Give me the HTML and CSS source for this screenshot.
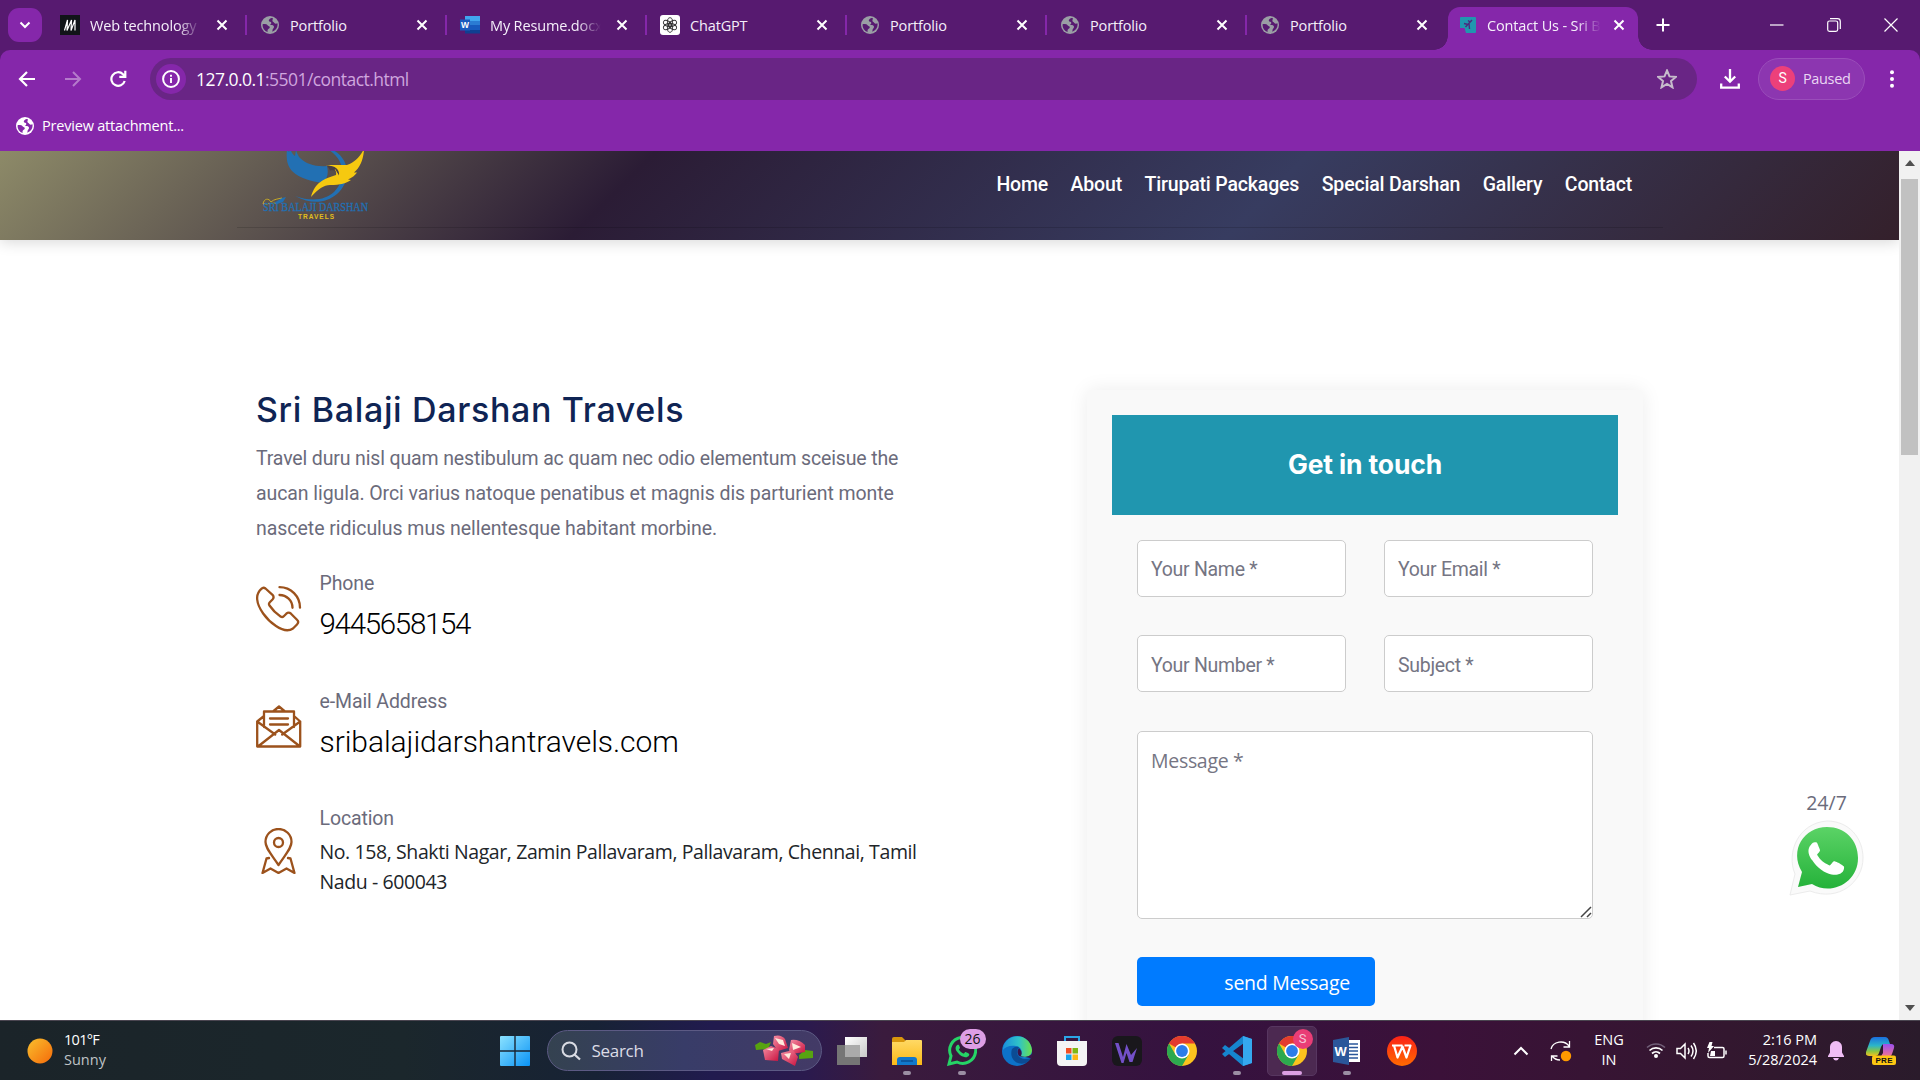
FILE: index.html
```html
<!DOCTYPE html>
<html lang="en">
<head>
<meta charset="utf-8">
<title>Contact Us - Sri Balaji Darshan Travels</title>
<link rel="stylesheet" href="styles.css">
</head>
<body>
<svg class="defs" width="0" height="0">
  <defs>
    <linearGradient id="gSun" x1="0" y1="0" x2="1" y2="1"><stop offset="0" stop-color="#f9c02d"/><stop offset="1" stop-color="#f56a0a"/></linearGradient>
    <linearGradient id="gWin" gradientUnits="userSpaceOnUse" x1="0" y1="0" x2="30" y2="30"><stop offset="0" stop-color="#8be2ff"/><stop offset="1" stop-color="#0a93f5"/></linearGradient>
    <linearGradient id="gFolder" x1="0" y1="0" x2="0" y2="1"><stop offset="0" stop-color="#ffd965"/><stop offset="1" stop-color="#fbb917"/></linearGradient>
    <linearGradient id="gWa" x1="0" y1="0" x2="0" y2="1"><stop offset="0" stop-color="#5bd366"/><stop offset="1" stop-color="#25b23a"/></linearGradient>
    <linearGradient id="gEdge" x1="0" y1="0" x2="1" y2="0"><stop offset="0" stop-color="#1b8fdc"/><stop offset=".55" stop-color="#2fc3c8"/><stop offset="1" stop-color="#6be04c"/></linearGradient>
    <linearGradient id="gCop1" x1="0" y1="0" x2="0" y2="1"><stop offset="0" stop-color="#1b6fe0"/><stop offset=".45" stop-color="#2bb5c9"/><stop offset=".75" stop-color="#8ac542"/><stop offset="1" stop-color="#f4c020"/></linearGradient>
    <linearGradient id="gCop2" x1="0" y1="0" x2="0" y2="1"><stop offset="0" stop-color="#9b4ff0"/><stop offset="1" stop-color="#f3768c"/></linearGradient>
    <linearGradient id="gTask" x1="0" y1="0" x2="1" y2="1"><stop offset="0" stop-color="#fff"/><stop offset="1" stop-color="#c9c9c9"/></linearGradient>
    <linearGradient id="gWps" x1="0" y1="0" x2="0" y2="1"><stop offset="0" stop-color="#fb2218"/><stop offset="1" stop-color="#ff6a00"/></linearGradient>
    <linearGradient id="gPink" x1="0" y1="0" x2="1" y2="1"><stop offset="0" stop-color="#f58fa4"/><stop offset="1" stop-color="#c9123f"/></linearGradient>
    <symbol id="globe" viewBox="0 0 18 18"><circle cx="9" cy="9" r="9"/><path class="land" d="M10.3 1.9C9 2.4 7.6 3.6 7.8 4.7c.3 1.2 2.300.8 2.500 2 .2 1-1.100 1.300-1.100 2.300 2.100-.2 3.800.3 3.800 2 0 1.300-1.300 1.500-1.400 2.700l-.3 2c3.200-1.100 5.300-3.800 5.300-6.900 0-.6-.1-1.100-.2-1.600-1 .6-2.300.7-3-.2-.700-1-2.200-1-2-2.400.1-1 .6-1.500.6-2.300zM1.600 8.200C2.900 7.900 5.700 8 6.500 9.200c.7 1.200 2.300.6 2.300 2 0 1.700-2.300 1.400-2.300 3.200l.1 1.600C3.500 14.900 1.300 12 1.600 8.200z"/></symbol>
    <symbol id="close" viewBox="0 0 12 12"><path d="M1.500 1.500l9 9M10.500 1.500l-9 9" stroke="#fff" stroke-width="2" fill="none"/></symbol>
    <symbol id="chrome" viewBox="0 0 30 30"><circle cx="15" cy="15" r="15" fill="#fcc31e"/><path d="M15 15L2 7.500A15 15 0 0 1 28 7.500L15 7.500z" fill="#e33b2e"/><path d="M2 7.500A15 15 0 0 0 15 30L21.500 18.700 8.500 18.700z" fill="#2da94f"/><circle cx="15" cy="15" r="7.500" fill="#fff"/><circle cx="15" cy="15" r="5.900" fill="#2b7de9"/></symbol>
    <symbol id="handset" viewBox="0 0 24 24"><path d="M20.500 16.900c-.5-.3-2.900-1.500-3.400-1.600-.4-.2-.8-.2-1.100.3-.3.500-1.300 1.600-1.600 1.900-.3.300-.6.400-1.100.1-3-1.500-4.900-2.700-6.900-6-.5-.9.500-.8 1.500-2.700.2-.3.100-.6 0-.9C7.800 7.700 6.800 5.300 6.400 4.300 6 3.400 5.600 3.500 5.300 3.500c-.7 0-1.500 0-2.200.8C2.400 5.100.9 6.500.9 9c0 2.600 1.900 5.100 2.200 5.400.3.400 3.700 5.900 9.200 8 3.500 1.400 4.900 1.300 6.600 1 1.100-.2 3.100-1.300 3.500-2.500.5-1.200.5-2.300.3-2.500-.2-.3-1.600-1.200-2.200-1.500z"/></symbol>
  </defs>
</svg>

<div class="browser">
  <div class="tabstrip">
    <button class="tab-search"><svg width="12" height="8" viewBox="0 0 12 8"><path d="M1.500 1.500L6 6l4.500-4.500" fill="none" stroke="#fff" stroke-width="2"/></svg></button>
    <div class="tab"><svg width="20" height="20" viewBox="0 0 20 20"><path fill="#111418" d="M0 0h20v20H0z"/><path d="M4.500 15.500L7.500 5 7 15.500 11.500 5 11 15.500 15 5v10.500" fill="none" stroke="#fff" stroke-width="1.200"/></svg><span class="title fade">Web technology</span><svg class="x"><use href="#close"/></svg></div>
    <div class="tab"><svg class="globe grey"><use href="#globe"/></svg><span class="title">Portfolio</span><svg class="x"><use href="#close"/></svg></div>
    <div class="tab"><svg width="20" height="20" viewBox="0 0 20 20"><path fill="#41a5ee" d="M5 1h15v5H5z"/><path fill="#2b7cd3" d="M5 6h15v4H5z"/><path fill="#185abd" d="M5 10h15v5H5z"/><path fill="#103f91" d="M5 15h15v3.500H5z"/><path fill="#185abd" d="M0 4.500h10v11H0z"/><text x="1" y="13" class="wlogo">W</text></svg><span class="title fade">My Resume.docx</span><svg class="x"><use href="#close"/></svg></div>
    <div class="tab"><svg width="20" height="20" viewBox="0 0 20 20"><rect width="20" height="20" rx="3" fill="#fff"/><g fill="none" stroke="#333" stroke-width=".9"><ellipse cx="10" cy="7" rx="2.600" ry="4.300"/><ellipse cx="10" cy="7" rx="2.600" ry="4.300" transform="rotate(60 10 10)"/><ellipse cx="10" cy="7" rx="2.600" ry="4.300" transform="rotate(120 10 10)"/><ellipse cx="10" cy="7" rx="2.600" ry="4.300" transform="rotate(180 10 10)"/><ellipse cx="10" cy="7" rx="2.600" ry="4.300" transform="rotate(240 10 10)"/><ellipse cx="10" cy="7" rx="2.600" ry="4.300" transform="rotate(300 10 10)"/></g></svg><span class="title">ChatGPT</span><svg class="x"><use href="#close"/></svg></div>
    <div class="tab"><svg class="globe grey"><use href="#globe"/></svg><span class="title">Portfolio</span><svg class="x"><use href="#close"/></svg></div>
    <div class="tab"><svg class="globe grey"><use href="#globe"/></svg><span class="title">Portfolio</span><svg class="x"><use href="#close"/></svg></div>
    <div class="tab last"><svg class="globe grey"><use href="#globe"/></svg><span class="title">Portfolio</span><svg class="x"><use href="#close"/></svg></div>
    <div class="tab active"><svg width="16" height="16" viewBox="0 0 16 16"><path fill="#2096af" d="M1 0h14a1 1 0 0 1 1 1v14a1 1 0 0 1-1 1H6L4.500 11H0V1a1 1 0 0 1 1-1z"/><path d="M4 6.500l4 1M12 3L5.500 10M9 6.500L9.500 12M8 3.500l2 1.500" stroke="#4b2a7e" stroke-width="1.400" fill="none"/></svg><span class="title fade">Contact Us - Sri B</span><svg class="x"><use href="#close"/></svg></div>
    <svg class="plus" width="14" height="14" viewBox="0 0 14 14"><path d="M7 0.500v13M.5 7h13" stroke="#fff" stroke-width="2"/></svg>
    <div class="winctl">
      <svg width="14" height="14" viewBox="0 0 14 14"><path d="M0 7h13.500" stroke="#fff" stroke-width="1.200"/></svg>
      <svg width="14" height="14" viewBox="0 0 14 14"><g fill="none" stroke="#fff" stroke-width="1.200"><rect x=".7" y="3" width="10" height="10.300" rx="1.800"/><path d="M3 .7h7.500a2.800 2.800 0 0 1 2.800 2.800v7.500"/></g></svg>
      <svg width="14" height="14" viewBox="0 0 14 14"><path d="M.5.5l13 13M13.500.5L.5 13.500" stroke="#fff" stroke-width="1.200"/></svg>
    </div>
  </div>
  <div class="toolbar">
    <div class="navbtns">
      <svg width="18" height="18" viewBox="0 0 18 18"><path d="M17 9H2.500M9 2L2 9l7 7" fill="none" stroke="#fff" stroke-width="2.200"/></svg>
      <svg width="18" height="18" viewBox="0 0 18 18"><path d="M1 9h14.500M9 2l7 7-7 7" fill="none" stroke="#b57bcb" stroke-width="2"/></svg>
      <svg width="18" height="18" viewBox="0 0 18 18"><path d="M14.700 11A6.800 6.800 0 1 1 13 4.200l1.500 1.600M15.300.8v6H9.300" fill="none" stroke="#fff" stroke-width="2.200"/></svg>
    </div>
    <div class="omnibox">
      <span class="site-info"><svg width="18" height="18" viewBox="0 0 18 18"><circle cx="9" cy="9" r="7.900" fill="none" stroke="#fff" stroke-width="2"/><path d="M9 8v5M9 4.700v2" stroke="#fff" stroke-width="1.900"/></svg></span>
      <span class="url">127.0.0.1<i>:5501/contact.html</i></span>
      <svg width="20" height="20" viewBox="0 0 20 20"><path d="M10 1.500l2.500 5.900 6.300.5-4.800 4.200 1.500 6.300-5.500-3.400-5.500 3.400L6 12.100 1.200 7.900l6.300-.5z" fill="none" stroke="#c6bccb" stroke-width="2"/></svg>
    </div>
    <svg class="dl" width="20" height="20" viewBox="0 0 20 20"><path d="M10 0v12M4.800 7.500L10 12.700l5.200-5.200M1.200 14.500v4.200h17.600v-4.200" fill="none" stroke="#fff" stroke-width="2.300"/></svg>
    <div class="profile"><span class="avatar">S</span><span>Paused</span></div>
    <svg class="kebab" width="6" height="18" viewBox="0 0 6 18"><g fill="#fff"><circle cx="3" cy="2.200" r="2"/><circle cx="3" cy="9" r="2"/><circle cx="3" cy="15.800" r="2"/></g></svg>
  </div>
  <div class="bookmarks"><svg class="globe white"><use href="#globe"/></svg><span>Preview attachment...</span></div>
</div>

<div class="viewport">
  <div class="page">
    <header class="site-header">
      <div class="container">
        <svg class="logo" width="110" height="76" viewBox="0 0 110 76">
          <path d="M71-1c17 9 19 31 4 44-11 9-25 11-42 2 17 6 30 4 39-4 12-12 12-31-5-42z" fill="#2270b3"/>
          <path d="M25-2c-1 10 0 16 5 22 8 8 20 10 30 12 5-4 7-9 5-17-11 1-21-2-27-8-2-2-3-5-4-8l-1 6c-3-2-4-5-5-8l-1 4z" fill="#2270b3"/>
          <path d="M102-2c-5 9-9 13-17 16l-21 0c7 1 11 5 10 10-12 4-21 7-25 22 7-8 13-12 19-12 10 0 17-2 21-5l-3-.5c4-2 7-4 9-7l-3 0c6-5 9-12 10-22z" fill="#f6c910"/>
          <path d="M65 14.500c8 0 13 4 12 10-2-5-5-6-9-5-1-2-2-4-3-5zM72 20l3 1-2-3z" fill="#4a3e42"/>
          <path d="M1 53c1-6 6-6 8-2 3-3 7-3 11-4l-5 5c-4 0-9 1-14 1z" fill="none" stroke="#c5a827"/>
          <path d="M12 52l8-5 4-1-3 5-6 2z" fill="#2270b3"/>
          <text x="1" y="60" class="logo-a" textLength="105" lengthAdjust="spacingAndGlyphs">SRI BALAJI DARSHAN</text>
          <text x="36" y="68" class="logo-b" textLength="36">TRAVELS</text>
        </svg>
        <nav><a>Home</a><a>About</a><a>Tirupati Packages</a><a>Special Darshan</a><a>Gallery</a><a>Contact</a></nav>
      </div>
    </header>
    <main class="contact">
      <section class="info">
        <h1>Sri Balaji Darshan Travels</h1>
        <p class="lead"><span class="l1">Travel duru nisl quam nestibulum ac quam nec odio elementum sceisue the</span><br><span class="l2">aucan ligula. Orci varius natoque penatibus et magnis dis parturient monte</span><br><span class="l3">nascete ridiculus mus nellentesque habitant morbine.</span></p>
        <div class="item phone">
          <svg width="46" height="46" viewBox="0 0 46 46" class="line"><path d="M9.500 2.500c-1.300-1-3-.8-4.200.4C2 6 .8 9.500 1.200 13.500 2 22 10 33.500 20 40c6 4 12.500 5.500 17 2.500l4-4c1.500-1.500 1.500-3.300 0-4.800l-6-6c-1.500-1.400-3.200-1.400-4.700 0l-2.500 2.500c-1 1-2.200 1-3.300.3-4.500-3-8-6.500-11-11-.8-1.200-.7-2.300.3-3.300L16.500 13.500c1.400-1.500 1.300-3.200 0-4.700z"/><path d="M23.500 1.200c11.500 0 20.500 9 20.500 20.500M23.500 9c7 0 13 5.500 13 12.800"/></svg>
          <div><span class="label">Phone</span><span class="value number">9445658154</span></div>
        </div>
        <div class="item mail">
          <svg width="46" height="44" viewBox="0 0 46 44" class="line"><path d="M8 11L1.200 16.500v25h43v-25L38 11M8 22V6.500h30V22M17 6.500l6-5 6 5M1.200 16.500l18 13M44.200 16.500l-18 13M2 41.500L23 25l21 16.500M14 13.500h18M14 19.500h18"/></svg>
          <div><span class="label">e-Mail Address</span><span class="value">sribalajidarshantravels.com</span></div>
        </div>
        <div class="item place">
          <svg width="46" height="46" viewBox="0 0 46 46" class="line"><path d="M22.500 37C14.500 25 9.500 20 9.500 14a13 13 0 0 1 26 0C35.500 20 30.500 25 22.500 37z"/><circle cx="22.500" cy="14.500" r="4.500"/><path d="M13 30l-2.500.5L6.500 45l8-4.500 8 4.500 8-4.500 8 4.500-4-14.500-2.500-.5"/></svg>
          <div><span class="label">Location</span><span class="address">No. 158, Shakti Nagar, Zamin Pallavaram, Pallavaram, Chennai, Tamil<br>Nadu - 600043</span></div>
        </div>
      </section>
      <section class="card">
        <h2>Get in touch</h2>
        <form>
          <div class="field">Your Name *</div><div class="field">Your Email *</div>
          <div class="field low">Your Number *</div><div class="field low">Subject *</div>
          <div class="field area"><span>Message *</span><svg width="12" height="12" viewBox="0 0 12 12"><path d="M1 11L11 1M7 11l4-4" stroke="#444" stroke-width="1.500"/></svg></div>
          <button type="button">send Message</button>
        </form>
      </section>
    </main>
    <aside class="chat"><span>24/7</span>
      <svg width="75" height="76" viewBox="0 0 75 76"><path d="M1 75L6 54C-3 33 9 3 38 1c22 0 36 17 36 37 0 24-24 44-53 33z" fill="#fafafa" stroke="#ececec"/><path d="M9 67l4-15C0 30 15 7 38 7c18 0 31 13 31 31 0 25-27 38-46 26z" fill="url(#gWa)"/><use href="#handset" x="18" y="15" width="39" height="42" fill="#fff"/></svg>
    </aside>
  </div>
  <div class="scrollbar"><svg width="10" height="6"><path d="M0 6L5 0l5 6z" fill="#505050"/></svg><div class="thumb"></div><svg width="10" height="6"><path d="M0 0L5 6l5-6z" fill="#505050"/></svg></div>
</div>

<footer class="taskbar">
  <div class="weather"><svg width="26" height="26"><circle cx="13" cy="13" r="12.500" fill="url(#gSun)"/></svg><div><span class="temp">101°F</span><span class="dim">Sunny</span></div></div>
  <div class="apps">
    <svg class="start" width="30" height="30" viewBox="0 0 30 30"><path fill="url(#gWin)" d="M0 1q0-1 1-1h13.300v14.300H0zM15.700 0H29q1 0 1 1v13.300H15.700zM0 15.700h14.300V30H1q-1 0-1-1zM15.700 15.700H30V29q0 1-1 1H15.700z"/></svg>
    <div class="search"><svg width="20" height="20" viewBox="0 0 20 20"><circle cx="8.500" cy="8.500" r="7" fill="none" stroke="#d9dbe3" stroke-width="2"/><path d="M13.500 13.500l5.500 5" stroke="#d9dbe3" stroke-width="2.300"/></svg><span>Search</span>
      <svg width="60" height="32" viewBox="0 0 60 32"><path d="M1 10l5-3 6 2 5-2-3 7-12 1zM45 20l6-5 8 1v7l-14 1z" fill="#57a310"/><g fill="url(#gPink)"><path d="M20 1q7-2 11 3l3 9-10 3-5-7z"/><path d="M37 5q8-1 14 5l0 7-14 2-2-4z"/><path d="M9 15l8-4 8 3-1 12-13-1z"/><path d="M27 18l12-3 5 7-3 9-13-7z"/></g><path d="M21 3l8 2 2 6-6-2zM38 8l9 4-8 3zM30 19l7-1-2 6zM12 14l8-1-2 3z" fill="#ffe9dc"/></svg>
    </div>
    <div class="app"><svg width="30" height="30" viewBox="0 0 30 30"><path fill="#757575" d="M0 9h23v20H0z"/><path fill="url(#gTask)" d="M8 1h22v20H8z"/><path fill="#aaa" d="M8 9h15v12H8z"/></svg></div>
    <div class="app run"><svg width="30" height="30" viewBox="0 0 30 30"><path fill="#d9960c" d="M0 3q0-2 2-2h8l4 4v6H0z"/><path fill="url(#gFolder)" d="M0 6h12l2-2h15q1 0 1 1v24H0z"/><path fill="#1178cc" d="M5 29v-5q0-3 3-3h14q3 0 3 3v5z"/><path d="M9 25h12" stroke="#0a4e93" stroke-width="1.500"/></svg></div>
    <div class="app run"><svg width="30" height="30" viewBox="0 0 30 30"><path d="M2 28l2-8A13 13 0 1 1 10 26z" fill="none" stroke="#25d366" stroke-width="3"/><use href="#handset" x="8" y="6" width="15" height="16" fill="#25d366"/></svg><b class="badge count">26</b></div>
    <div class="app"><svg width="30" height="30" viewBox="0 0 30 30"><circle cx="15" cy="15" r="15" fill="#0d72c8"/><path d="M1 12C4-4 28-4 30 14c0 6-6 9-12 6 3-3 2-9-4-10C8 9 3 11 1 14z" fill="url(#gEdge)"/><path d="M10 13c-3 9 4 17 14 14 2-1 4-3 5-5-8 3-14-1-14-6q0-3 2-5-4-1-7 2z" fill="#0b4c94"/><path d="M17 20q-3-4 0-8 4 4 2 8l9 2 3 0v-5q-5 6-14 3z" fill="#3a1549"/></svg></div>
    <div class="app"><svg width="30" height="30" viewBox="0 0 30 30"><path d="M8 6V1h14v5" fill="none" stroke="#2ba5e6" stroke-width="2"/><path fill="#f4f4f4" d="M0 5h30v21q0 4-4 4H4q-4 0-4-4z"/><path fill="#f04f24" d="M9 12h5.500v5.500H9z"/><path fill="#7db814" d="M15.500 12H21v5.500h-5.500z"/><path fill="#16a4ec" d="M9 18.500h5.500V24H9z"/><path fill="#fcb813" d="M15.500 18.500H21V24h-5.500z"/></svg></div>
    <div class="app"><svg width="30" height="30" viewBox="0 0 30 30"><rect width="30" height="30" rx="6" fill="#19171c"/><path d="M3 7h3.500L11 21l3.500-13L19 19l6-7-4.500 14h-3L14.500 17 11.500 27h-2z" fill="#7350c8"/></svg></div>
    <div class="app"><svg width="30" height="30"><use href="#chrome"/></svg></div>
    <div class="app run"><svg width="30" height="30" viewBox="0 0 30 30"><path d="M21 0l9 3v24l-9 3L0 12l3-3 19 14V7L3 21l-3-3z" fill="#1686cf"/><path d="M21 0l9 3v24l-9 3z" fill="#35a8ef"/></svg></div>
    <div class="app run current"><svg width="30" height="30"><use href="#chrome"/></svg><b class="badge s">S</b></div>
    <div class="app run"><svg width="30" height="30" viewBox="0 0 30 30"><path fill="#fff" d="M14 4h14v22H14z"/><path d="M17 8h9M17 11.500h9M17 15h9M17 18.500h9M17 22h9" stroke="#2b579a" stroke-width="1.300"/><path fill="#2b579a" d="M1 4l16-3v28L1 26z"/><text x="2.500" y="20" class="wapp">W</text></svg></div>
    <div class="app"><svg width="30" height="30" viewBox="0 0 30 30"><circle cx="15" cy="15" r="15" fill="url(#gWps)"/><path d="M5 9.500h10.500M7 9.500l3.500 12 5-11 4 11 4-12h-6" fill="none" stroke="#fff" stroke-width="2.200" stroke-linejoin="round"/></svg></div>
  </div>
  <div class="tray">
    <svg width="16" height="10" viewBox="0 0 16 10"><path d="M1.500 8.500L8 2l6.500 6.500" fill="none" stroke="#fff" stroke-width="2"/></svg>
    <svg class="sync" width="22" height="22" viewBox="0 0 22 22"><path d="M1 9A10 9 0 0 1 19 6M19.500 1v6h-6M1.500 21v-5h6M2 16q3 4 8 4" fill="none" stroke="#fff" stroke-width="1.300"/><circle cx="16" cy="16" r="5.200" fill="#ff9a00"/></svg>
    <div class="lang"><span>ENG</span><span>IN</span></div>
    <svg class="wifi" width="20" height="17" viewBox="0 0 20 17"><path d="M1 5.500a13 13 0 0 1 18 0" fill="none" stroke="#715f78" stroke-width="1.500"/><path d="M3.500 8.500a9.500 9.500 0 0 1 13 0M6 11.500a6 6 0 0 1 8 0" fill="none" stroke="#fff" stroke-width="1.700"/><circle cx="10" cy="14" r="2" fill="#fff"/></svg>
    <svg class="vol" width="21" height="18" viewBox="0 0 21 18"><path d="M1 6.500h3.500L9 2v14l-4.500-4.500H1zM12 6q2 3 0 6M15 3.500q4 5.500 0 11M17.500 1q5.500 8 0 16" fill="none" stroke="#fff" stroke-width="1.500"/></svg>
    <svg class="bat" width="21" height="18" viewBox="0 0 21 18"><path d="M8 5.500h8.500q1.500 0 1.500 1.500v7q0 1.500-1.500 1.500H3.500Q2 15.500 2 14v-3M20 8.500v4" fill="none" stroke="#fff" stroke-width="1.500"/><path d="M3.500 0h3L5.500 4h2.500L2 11l1-5H1zM5 9h4v5H4z" fill="#fff"/></svg>
    <div class="clock"><span>2:16 PM</span><span>5/28/2024</span></div>
    <svg class="bell" width="18" height="20" viewBox="0 0 18 20"><path d="M9 0a6 6 0 0 1 6 6.500v5l2 3.500v1H1v-1l2-3.500v-5A6 6 0 0 1 9 0zM6 17h6q-1 2.500-3 2.500T6 17z" fill="#f0bdf5"/></svg>
    <svg class="copilot" width="30" height="29" viewBox="0 0 30 29"><path d="M9 1h10q3 0 4 4l1 3h-6q-2 0-3 3l-2 6q-1 3-4 3H3q-4 0-3-4L4 5q1-4 5-4z" fill="url(#gCop1)"/><path d="M17 8h8q4 0 3 4l-2 6q-1 3-5 3h-8q3-1 4-4z" fill="url(#gCop2)"/><rect x="6" y="19.500" width="24" height="9.500" rx="2" fill="#fcc612"/><text x="9.500" y="27.300" class="pre" textLength="17">PRE</text></svg>
  </div>
</footer>
</body>
</html>
```
FILE: styles.css
```css
* { box-sizing: border-box; }
body { margin: 0; width: 1920px; height: 1080px; overflow: hidden; display: flex; flex-direction: column; background: #fff; font-family: "Open Sans", "Noto Sans", sans-serif; }
svg { flex: none; display: block; }
.defs { position: absolute; }
button { border: 0; padding: 0; font: inherit; }

/* browser frame */
.browser { height: 151px; background: #571a70; color: #fff; font-size: 14.5px; flex: none; }
.tabstrip { height: 50px; display: flex; align-items: center; padding-left: 8px; }
.tab-search { width: 34px; height: 34px; border-radius: 11px; background: #8527aa; display: grid; place-items: center; margin-right: 5px; }
.tab { width: 200px; height: 20px; display: flex; align-items: center; padding-left: 13px; border-right: 2px solid #8527aa; }
.title { width: 112px; margin-left: 10px; white-space: nowrap; overflow: hidden; letter-spacing: -0.15px; line-height: 22px; padding-top: 1px; color: #f5effa; }
.tab .globe { margin: 0 1px; }
.fade { -webkit-mask-image: linear-gradient(90deg, #000 78%, transparent 99%); mask-image: linear-gradient(90deg, #000 78%, transparent 99%); }
.x { width: 12px; height: 12px; margin-left: 14px; }
.globe { width: 18px; height: 18px; }
.grey { fill: #9a9ea5; color: #571a70; }
.white { fill: #fff; color: #8527aa; }
.land { fill: currentColor; }
.wlogo { font: bold 8.500px "Liberation Sans", sans-serif; fill: #fff; }
.tab.last { border: 0; width: 201px; }
.tab.active { width: 190px; height: 43px; align-self: flex-end; background: #8527aa; border: 0; border-radius: 12px 12px 0 0; padding: 0 0 7px 12px; position: relative; }
.tab.active::before, .tab.active::after { content: ""; position: absolute; bottom: 0; width: 14px; height: 14px; }
.tab.active::before { left: -14px; background: radial-gradient(circle at 0 0, transparent 13.500px, #8527aa 14px); }
.tab.active::after { right: -14px; background: radial-gradient(circle at 100% 0, transparent 13.500px, #8527aa 14px); }
.active .title { margin-left: 11px; width: 115px; }
.active .x { margin-left: 11px; }
.plus { margin-left: 18px; }
.winctl { display: flex; gap: 43px; margin-left: auto; margin-right: 22px; }
.toolbar { height: 58px; background: #8527aa; border-radius: 10px 10px 0 0; display: flex; align-items: center; padding: 0 25px 0 18px; }
.navbtns { display: flex; gap: 28px; width: 132px; }
.omnibox { width: 1547px; height: 42px; border-radius: 21px; background: #692585; display: flex; align-items: center; padding: 0 20px 0 6px; }
.site-info { width: 30px; height: 30px; border-radius: 50%; background: #8527aa; display: grid; place-items: center; }
.url { margin-left: 10px; font-size: 17.500px; letter-spacing: -0.54px; flex: 1; }
.url i { font-style: normal; color: #cfa6de; }
.dl { margin-left: 23px; }
.profile { width: 107px; height: 42px; margin-left: 18px; border: 1px solid #9a4dba; border-radius: 21px; background: #8c36b0; display: flex; align-items: center; gap: 8px; padding: 0 0 1px 11px; color: #ead6f3; letter-spacing: -0.35px; }
.avatar { width: 25px; height: 25px; border-radius: 50%; background: #ec407a; color: #fff; text-align: center; font: 14px/25px Roboto, sans-serif; }
.kebab { margin-left: auto; }
.bookmarks { height: 43px; background: #8527aa; display: flex; align-items: center; gap: 8px; padding: 0 0 8px 16px; letter-spacing: -0.2px; }

/* web page */
.viewport { height: 869px; display: flex; overflow: hidden; position: relative; flex: none; }
.page { width: 1899px; height: 869px; overflow: hidden; }
.site-header { height: 89px; background: linear-gradient(135deg, #8d8a68 0%, #2b1c35 33%, #373c60 66%, #34202b 100%); box-shadow: 0 2px 14px rgba(0,0,0,.16); }
.container { width: 1426px; height: 77px; margin-left: 237px; border-bottom: 1px solid rgba(0,0,0,.14); display: flex; justify-content: space-between; padding: 0 31px 0 25px; }
.logo-a { font: 12px "Liberation Serif", serif; fill: #2270b3; stroke: #2270b3; stroke-width: .3; }
.logo-b { font: bold 6.500px "Liberation Sans", sans-serif; fill: #e2bf1b; }
nav { display: flex; gap: 22.500px; color: #fff; font: 500 19.500px/24px Roboto, sans-serif; letter-spacing: -.17px; padding-top: 22px; white-space: nowrap; }
.contact { display: flex; padding: 150px 0 0 256px; }
.info { width: 831px; }
h1 { margin: 0; font: 500 34px/40px Inter, sans-serif; color: #0f2454; letter-spacing: .65px; white-space: nowrap; }
.lead { margin: 11px 0 0; font: 400 19.500px/35px Roboto, sans-serif; color: #6b6b7b; white-space: nowrap; }
.l1 { letter-spacing: -.14px; }
.l2 { letter-spacing: -.075px; }
.l3 { letter-spacing: -.035px; }
.item { display: flex; align-items: center; gap: 17.500px; font-family: Roboto, sans-serif; }
.item > div { display: flex; flex-direction: column; }
.line { fill: none; stroke: #9c521c; stroke-width: 2.300; stroke-linejoin: round; stroke-linecap: round; }
.label { font-size: 19.500px; line-height: 30px; color: #6b6b7b; letter-spacing: -.12px; }
.value { font-size: 30px; line-height: 50px; font-weight: 300; color: #000; letter-spacing: -.07px; }
.number { font-size: 29.500px; letter-spacing: -1.300px; }
.address { font: 19.500px/30px "Open Sans", sans-serif; color: #212529; padding-top: 3px; white-space: nowrap; letter-spacing: -.4px; }
.phone { margin-top: 23px; }
.mail { margin-top: 38px; }
.place { margin-top: 37px; }
.card { width: 556px; height: 660px; background: #f9f9f9; border-radius: 6px; box-shadow: 0 0 20px rgba(0,0,0,.08); padding: 25px; }
h2 { margin: 0; height: 100px; background: #2096af; color: #fff; text-align: center; font: 700 26.500px/98px Inter, sans-serif; letter-spacing: -.15px; }
form { padding: 25px; display: grid; grid-template-columns: 209px 209px; column-gap: 38px; row-gap: 38px; justify-content: start; }
.field { height: 57px; border: 1px solid #ccc; border-radius: 5px; background: #fff; padding-left: 13px; font: 19.500px/57px Roboto, sans-serif; letter-spacing: -.3px; color: #757583; }
.low { line-height: 59px; }
.area { grid-column: span 2; height: 188px; margin-top: 1px; display: flex; justify-content: space-between; font-family: "Open Sans", sans-serif; }
.area svg { align-self: flex-end; }
form button { width: 238px; height: 49px; border-radius: 5px; background: #007bff; color: #fff; font-size: 19.500px; padding: 1px 25px 0 0; text-align: right; white-space: nowrap; letter-spacing: -.25px; }
.chat { position: absolute; left: 1789px; top: 637px; width: 75px; text-align: center; font: 19.500px/30px "Open Sans", sans-serif; color: #6b6b7b; }
.chat svg { margin-top: 2px; }
.scrollbar { width: 21px; background: #f1f1f1; display: flex; flex-direction: column; align-items: center; padding: 9px 0; }
.thumb { width: 17px; height: 276px; background: #c1c1c1; margin: 13px 0 auto; }

/* taskbar */
.taskbar { height: 60px; display: flex; align-items: center; flex: none; color: #fff; font-size: 14.500px; line-height: 20px; border-top: 1px solid #4a4550; background: linear-gradient(90deg, #1b2429 0, #1b272c 21%, #172235 31%, #211b4e 37%, #2b1a4e 42%, #3a1b3d 46%, #35123f 62%, #3b1139 75%, #33172f 90%, #2a1b2b 100%); }
.weather { display: flex; gap: 11.500px; align-items: center; padding-left: 26.500px; width: 499.500px; }
.weather div, .lang, .clock { padding-bottom: 2px; }
.weather span, .lang span, .clock span { display: block; }
.temp { letter-spacing: -.7px; }
.dim { color: #bfc3c6; }
.apps { display: flex; align-items: center; }
.start { margin-right: 17px; }
.search { width: 275px; height: 41px; border: 1px solid #5c5a84; border-radius: 21px; background: linear-gradient(90deg, #344250, #383c68 50%, #433a66); display: flex; align-items: center; padding: 0 7px 0 13px; font-size: 17px; letter-spacing: -.3px; color: #dcdce6; }
.search span { flex: 1; margin-left: 11px; }
.search + .app { margin-left: 5px; }
.app { width: 50px; height: 50px; margin-right: 5px; display: grid; place-items: center; position: relative; border-radius: 5px; }
.run::after { content: ""; position: absolute; left: 21px; bottom: 1px; width: 8px; height: 4px; border-radius: 2px; background: #9b8ea3; }
.current { background: #4c2951; border: 1px solid #573660; }
.current::after { left: 14px; bottom: 0; width: 20px; background: #dc9fe4; }
.badge { position: absolute; border-radius: 13px; font-weight: 400; text-align: center; }
.count { left: 23px; top: 3px; width: 26px; height: 20px; background: #dd9ee5; color: #111; line-height: 20px; font-size: 14px; }
.s { left: 25px; top: 2px; width: 20px; height: 20px; background: #e93d76; color: #f6c6d8; font: 13px/20px Roboto, sans-serif; }
.wapp { font: bold 13px "Liberation Sans", sans-serif; fill: #fff; }
.tray { display: flex; align-items: center; margin-left: auto; padding-right: 24px; }
.sync { margin-left: 21px; }
.lang { width: 34px; margin-left: 20px; text-align: center; }
.wifi { margin-left: 20px; }
.vol { margin-left: 10px; }
.bat { margin-left: 9px; }
.clock { width: 90px; text-align: right; }
.bell { margin-left: 10px; }
.copilot { margin-left: 21px; }
.pre { font: bold 8px "Liberation Sans", sans-serif; fill: #111; }
```
